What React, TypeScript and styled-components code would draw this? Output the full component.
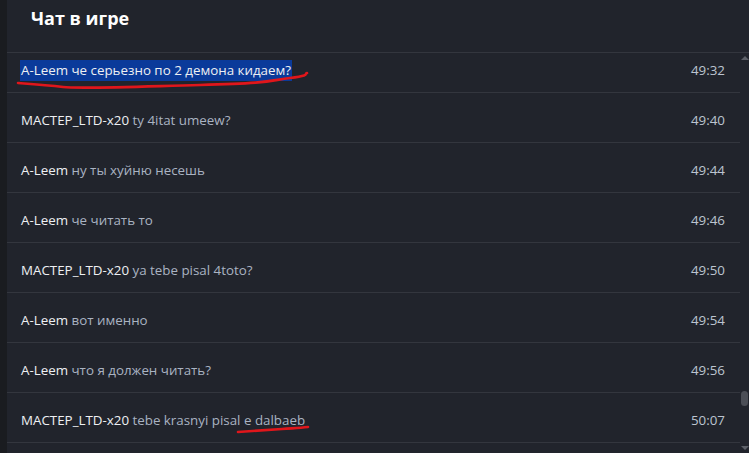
import React from "react";
import styled, { createGlobalStyle } from "styled-components";

const Global = createGlobalStyle`
  html, body { margin: 0; padding: 0; background: #21242c; }
  body { font-family: "Open Sans", "Noto Sans", sans-serif; }
  #root { width: 749px; height: 453px; overflow: hidden; }
`;

const Root = styled.div`
  display: flex;
  width: 749px;
  height: 453px;
  background: #21242c;
`;

const LeftStrip = styled.div`
  width: 7px;
  flex: none;
  background: #1a1c20;
`;

const Main = styled.div`
  flex: 1;
  display: flex;
  flex-direction: column;
  min-width: 0;
`;

const Header = styled.div`
  height: 53px;
  flex: none;
  box-sizing: border-box;
  border-bottom: 1px solid #33363e;
  padding-left: 24px;
  display: flex;
  align-items: flex-start;
`;

const Title = styled.h1`
  margin: 0;
  padding-top: 5px;
  font-size: 18px;
  font-weight: 700;
  color: #ffffff;
  line-height: 27px;
`;

const Body = styled.div`
  flex: 1;
  display: flex;
  min-height: 0;
`;

const List = styled.div`
  flex: 1;
  overflow: hidden;
  min-width: 0;
`;

const ListInner = styled.div`
  margin-top: -10px;
`;

const Row = styled.div`
  position: relative;
  height: 50px;
  box-sizing: border-box;
  border-bottom: 1px solid #33363e;
  display: flex;
  align-items: center;
  justify-content: space-between;
  padding: 5px 15px 0 13px;
  font-size: 13.35px;
`;

const Line = styled.span<{ $selected?: boolean }>`
  line-height: 21px;
  padding: 0 1px;
  background: ${(p) => (p.$selected ? "#0a3a9a" : "transparent")};
  white-space: nowrap;
`;

const Name = styled.span`
  color: #eef0f3;
`;

const Msg = styled.span<{ $selected?: boolean }>`
  color: ${(p) => (p.$selected ? "#eef0f3" : "#aab3c2")};
`;

const Time = styled.span`
  color: #bcc4d0;
`;

const Scribble = styled.svg`
  position: absolute;
  left: 0;
  top: 0;
  width: 100%;
  height: 50px;
  pointer-events: none;
  overflow: visible;
`;

const ScrollTrack = styled.div`
  width: 9px;
  flex: none;
  display: flex;
  flex-direction: column;
  align-items: center;
`;

const Arrow = styled.div<{ $down?: boolean }>`
  width: 0;
  height: 0;
  margin: ${(p) => (p.$down ? "auto 0 3px" : "3px 0 0")};
  border-left: 4px solid transparent;
  border-right: 4px solid transparent;
  ${(p) =>
    p.$down
      ? "border-top: 4px solid #5d6068;"
      : "border-bottom: 4px solid #5d6068;"}
`;

const ThumbGap = styled.div`
  height: 331px;
  flex: none;
`;

const Thumb = styled.div`
  width: 7px;
  height: 15px;
  border-radius: 4px;
  background: #4b4e56;
`;

type Message = { name: string; text: string; time: string };

const messages: Message[] = [
  { name: "A-Leem", text: "че серьезно по 2 демона кидаем?", time: "49:32" },
  { name: "MACTEP_LTD-x20", text: "ty 4itat umeew?", time: "49:40" },
  { name: "A-Leem", text: "ну ты хуйню несешь", time: "49:44" },
  { name: "A-Leem", text: "че читать то", time: "49:46" },
  { name: "MACTEP_LTD-x20", text: "ya tebe pisal 4toto?", time: "49:50" },
  { name: "A-Leem", text: "вот именно", time: "49:54" },
  { name: "A-Leem", text: "что я должен читать?", time: "49:56" },
  { name: "MACTEP_LTD-x20", text: "tebe krasnyi pisal e dalbaeb", time: "50:07" },
];

const scribbles: Record<number, string> = {
  0: "M11 40 C 25 41, 40 42, 56 44 S 120 44, 193 42 S 260 38, 283 35 S 296 31, 300 30",
  7: "M231 39 C 245 38, 260 37, 275 36 S 293 35, 301 34",
};

export default function App() {
  return (
    <Root>
      <Global />
      <LeftStrip />
      <Main>
        <Header>
          <Title>Чат в игре</Title>
        </Header>
        <Body>
          <List>
            <ListInner>
              {messages.map((m, i) => (
                <Row key={i}>
                  <Line $selected={i === 0}>
                    <Name>{m.name}</Name> <Msg $selected={i === 0}>{m.text}</Msg>
                  </Line>
                  <Time>{m.time}</Time>
                  {scribbles[i] && (
                    <Scribble viewBox="0 0 733 50" preserveAspectRatio="none">
                      <path
                        d={scribbles[i]}
                        fill="none"
                        stroke="#e0161b"
                        strokeWidth={2.6}
                        strokeLinecap="round"
                      />
                    </Scribble>
                  )}
                </Row>
              ))}
              <Row />
            </ListInner>
          </List>
          <ScrollTrack>
            <Arrow />
            <ThumbGap />
            <Thumb />
            <Arrow $down />
          </ScrollTrack>
        </Body>
      </Main>
    </Root>
  );
}
